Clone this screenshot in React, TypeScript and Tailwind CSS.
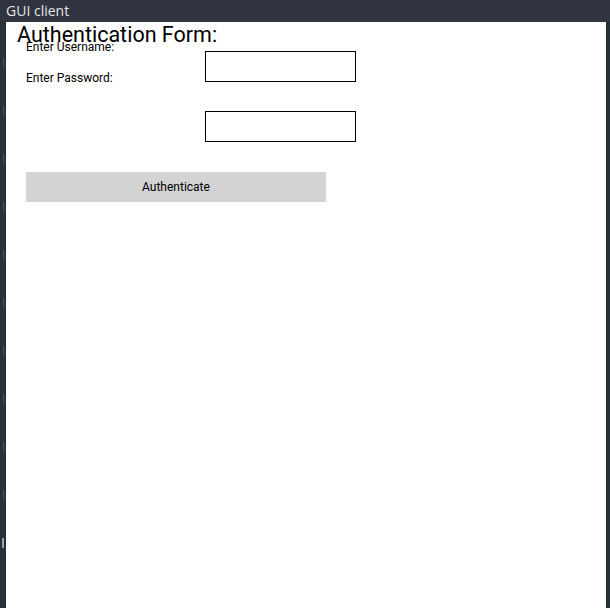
import React from "react";

const marksLeft = [58, 106, 154, 202, 250, 298, 345, 393, 442, 490, 538];

export default function App() {
  return (
    <div className="w-[610px] h-[608px] bg-[#263238] flex flex-col overflow-hidden" style={{ fontFamily: "Roboto, sans-serif" }}>
      <div className="h-[22px] bg-[#2f3440] flex items-center pl-[6px] shrink-0">
        <span className="text-[14px] text-[#e6e6e6] leading-none" style={{ fontFamily: '"Open Sans", sans-serif' }}>GUI client</span>
      </div>
      <div className="flex flex-1">
        <div className="w-[6px] bg-[#263238] flex flex-col items-center pt-[36px] gap-[38px]">
          {marksLeft.map((y, i) => (
            <div key={i} className={i === marksLeft.length - 1 ? "w-[2px] h-[10px] bg-[#9aa3a6]" : "w-px h-[10px] bg-[#4a5558]"} />
          ))}
        </div>
        <div className="w-[600px] bg-white flex flex-col">
          <div className="h-[21px] -mt-[3px] pl-[11px] text-[21.5px] leading-normal text-black whitespace-nowrap">Authentication Form:</div>
          <div className="flex pl-[20px]">
            <div className="w-[179px] flex flex-col text-[12px] leading-[14px] text-black">
              <div>Enter Username:</div>
              <div className="mt-[17px]">Enter Password:</div>
            </div>
            <div className="flex flex-col pt-[11px] gap-[29px]">
              <div className="w-[151px] h-[31px] border border-black bg-white" />
              <div className="w-[151px] h-[31px] border border-black bg-white" />
            </div>
          </div>
          <div className="pl-[20px] mt-[30px]">
            <div className="w-[300px] h-[30px] bg-[#d3d3d3] flex items-center justify-center text-[12px] text-black">Authenticate</div>
          </div>
        </div>
        <div className="w-[4px] bg-[#263238]" />
      </div>
    </div>
  );
}
